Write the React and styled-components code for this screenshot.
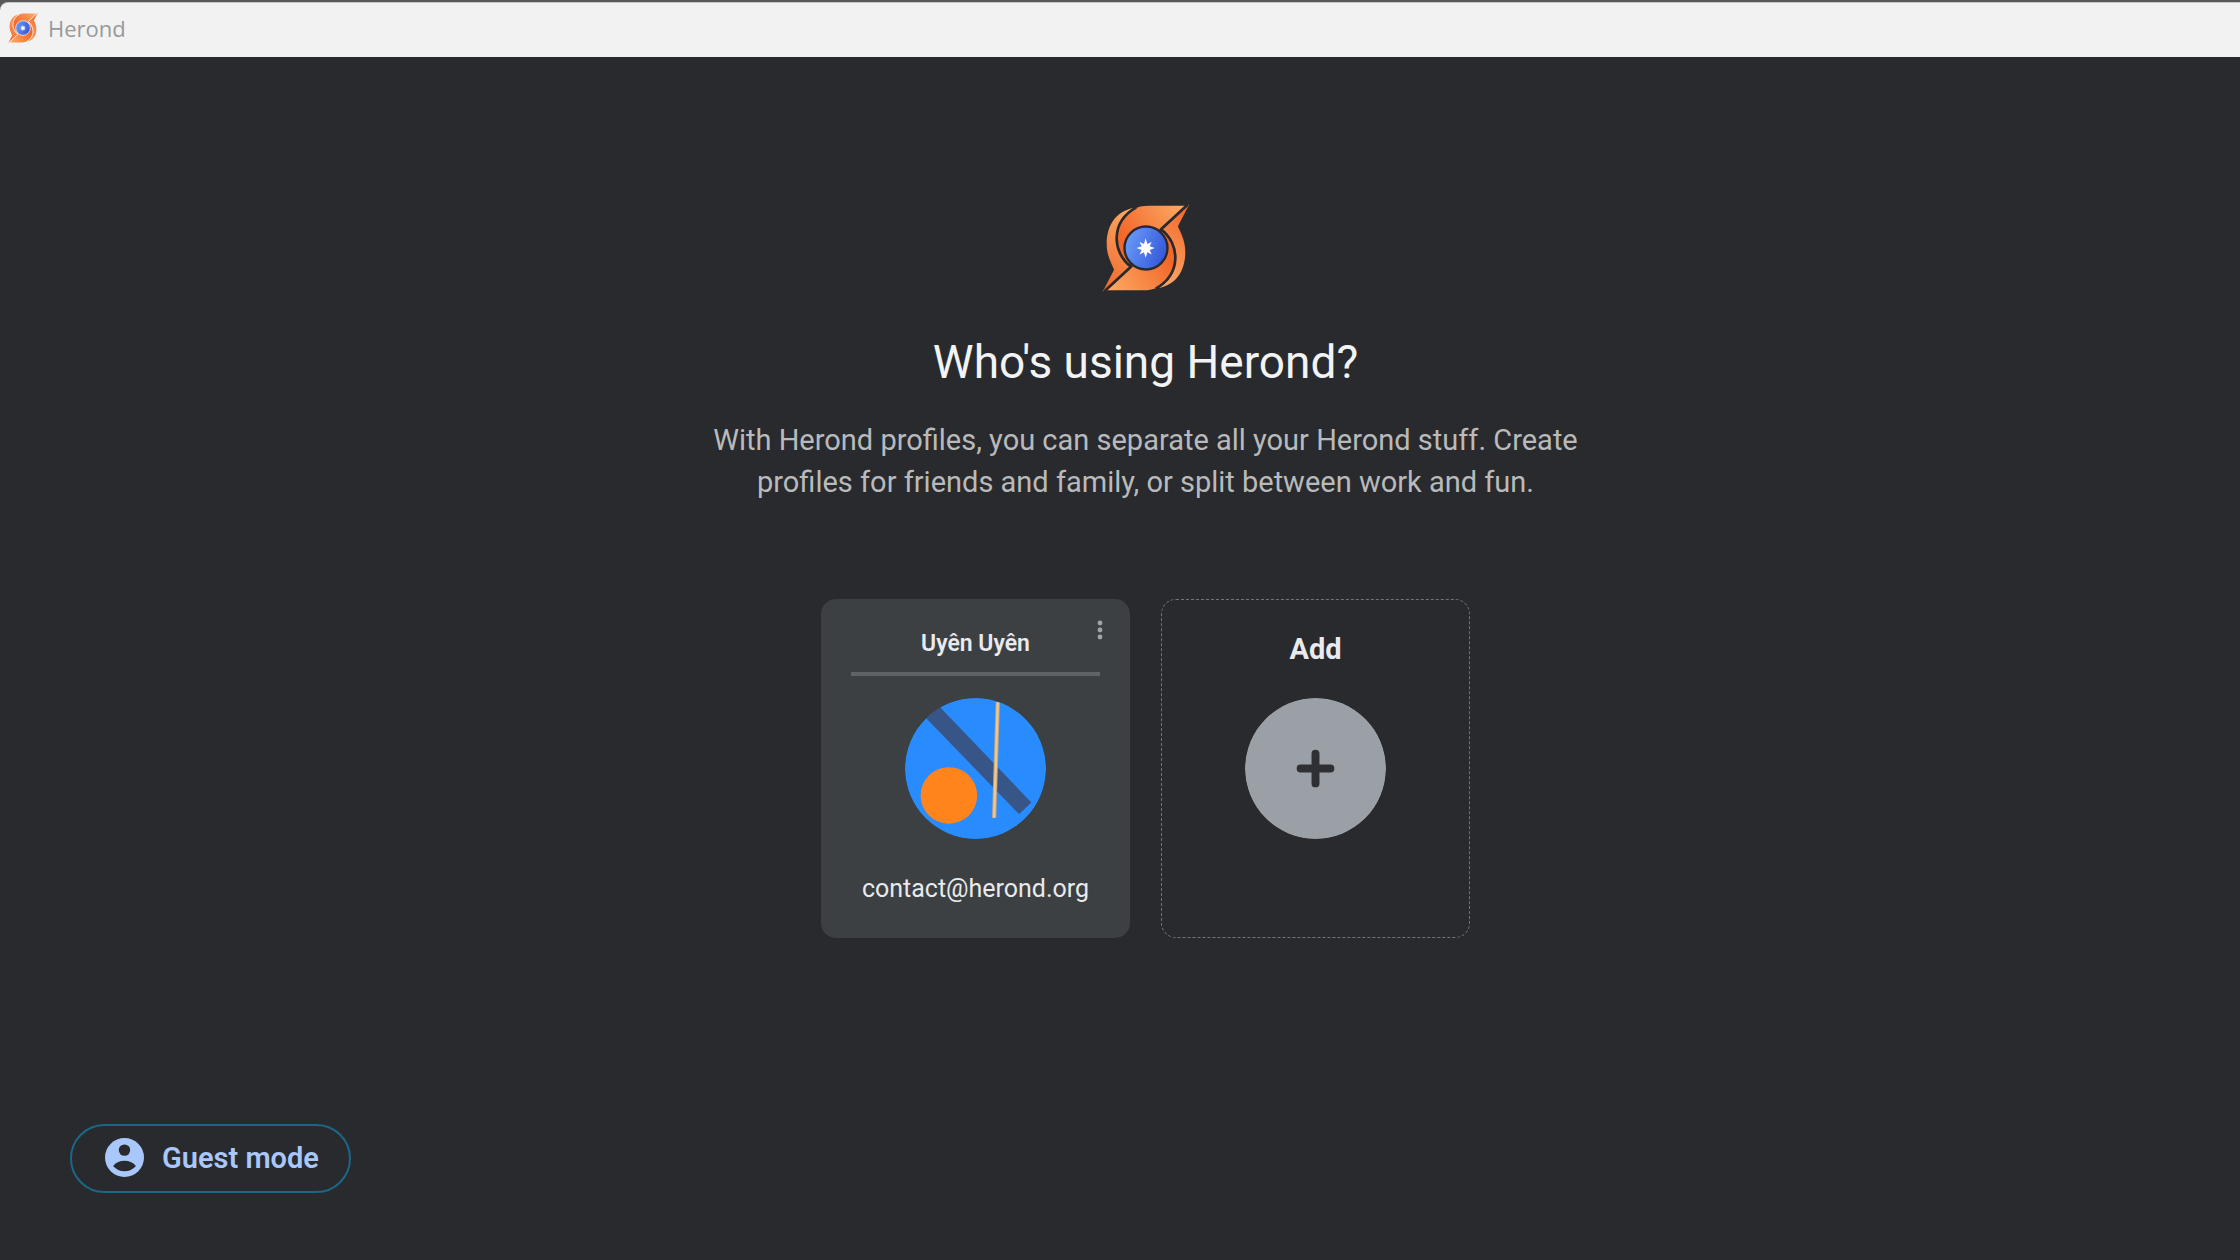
import React from "react";
import styled, { createGlobalStyle } from "styled-components";

const GlobalStyle = createGlobalStyle`
  * {
    box-sizing: border-box;
  }
  body {
    margin: 0;
    background: #292a2d;
    font-family: Roboto, "Liberation Sans", sans-serif;
  }
  button {
    font-family: inherit;
    cursor: pointer;
  }
`;

const Page = styled.div`
  display: flex;
  flex-direction: column;
  min-height: 100vh;
`;

const TitleBar = styled.header`
  background: linear-gradient(#5a5859, #5a5859) top / 100% 12px no-repeat;
  padding-top: 2px;
`;

const TitleBarInner = styled.div`
  display: flex;
  align-items: center;
  gap: 10px;
  height: 55px;
  padding: 0 8px 4px;
  background: #f2f2f2;
  border-top: 1px solid #c4c4c4;
  border-top-left-radius: 8px;
  color: #999999;
  font-family: "Open Sans", "Noto Sans", sans-serif;
  font-size: 22px;
`;

const LogoSvg = styled.svg`
  width: ${(props) => props.$size}px;
  height: ${(props) => props.$size}px;
  color: ${(props) => props.$gap};
`;

const Main = styled.main`
  display: flex;
  flex-direction: column;
  align-items: center;
  padding: 147px 0 40px 51px;
`;

const Title = styled.h1`
  margin: 40px 0 0;
  color: #f1f3f4;
  font-size: 46px;
  font-weight: 400;
  line-height: 60px;
`;

const Subtitle = styled.p`
  max-width: 900px;
  margin: 27px 0 0;
  color: #b9babc;
  font-size: 29px;
  line-height: 42px;
  text-align: center;
`;

const Profiles = styled.div`
  display: flex;
  flex-wrap: wrap;
  gap: 31px;
  margin-top: 96px;
`;

const Card = styled.div`
  position: relative;
  display: flex;
  width: 309px;
  height: 339px;
  border-radius: 15px;
  background: #3c4043;
`;

const CardButton = styled.button`
  display: flex;
  flex: 1;
  flex-direction: column;
  align-items: center;
  padding: 24px 30px 0;
  border: 0;
  border-radius: 15px;
  background: transparent;
  color: #e8eaed;
`;

const AddButton = styled(CardButton)`
  flex: none;
  width: 309px;
  height: 339px;
  padding-top: 23px;
  border: 1px dashed #70757a;
`;

const ProfileName = styled.span`
  width: 100%;
  height: 53px;
  border-bottom: 4px solid #5f6368;
  font-size: 23px;
  font-weight: 600;
  line-height: 42px;
`;

const AddLabel = styled.span`
  height: 53px;
  font-size: 29px;
  font-weight: 700;
  line-height: 52px;
`;

const Picture = styled.svg`
  width: 141px;
  height: 141px;
  margin-top: 22px;
  border-radius: 50%;
`;

const Email = styled.span`
  margin-top: 32px;
  font-size: 25px;
  line-height: 36px;
`;

const MenuButton = styled.button`
  position: absolute;
  top: 12px;
  right: 12px;
  width: 36px;
  height: 38px;
  padding: 0;
  border: 0;
  background: transparent;
`;

const Footer = styled.footer`
  margin-top: auto;
  padding: 0 70px 67px;
`;

const GuestButton = styled.button`
  display: flex;
  align-items: center;
  gap: 18px;
  height: 69px;
  padding: 0 30px 2px 33px;
  border: 2px solid #1b6788;
  border-radius: 35px;
  background: transparent;
  color: #a8c7fa;
  font-size: 29px;
  font-weight: 600;
`;

function Logo({ id, size, gap }) {
  return (
    <LogoSvg $size={size} $gap={gap} viewBox="66 42 262 262" aria-hidden="true">
      <defs>
        <linearGradient id={id + "-wing"} x1="0" y1="0.6" x2="1" y2="0">
          <stop offset="0.1" stopColor="#f2682a" />
          <stop offset="1" stopColor="#fdab66" />
        </linearGradient>
        <linearGradient id={id + "-edge"} x1="0.6" y1="0" x2="0.3" y2="1">
          <stop offset="0" stopColor="#fba564" />
          <stop offset="1" stopColor="#f26a2c" />
        </linearGradient>
        <linearGradient id={id + "-core"} x1="0" y1="0.3" x2="1" y2="0.7">
          <stop offset="0" stopColor="#6a9bf8" />
          <stop offset="1" stopColor="#3255d8" />
        </linearGradient>
      </defs>
      {[0, 180].map((angle) => (
        <g key={angle} transform={`rotate(${angle} 197 173)`}>
          <path
            d="M162 53C104 64 80 108 80 162C80 198 96 222 102 238L68 303L150 230C96 178 96 96 162 53Z"
            fill={`url(#${id}-edge)`}
          />
          <path
            d="M206 47H313L246 113L150 222C102 184 88 96 160 57Q178 47 206 47Z"
            fill={`url(#${id}-wing)`}
          />
        </g>
      ))}
      {[0, 180].map((angle) => (
        <path
          key={angle}
          transform={`rotate(${angle} 197 173)`}
          d="M74 301L152 229C96 186 90 96 168 52"
          fill="none"
          stroke="currentColor"
          strokeWidth="8"
        />
      ))}
      <circle cx="197" cy="173" r="64" fill={`url(#${id}-core)`} stroke="currentColor" strokeWidth="7" />
      <path
        d="M196 144L201 161L214 155L208 168L223 173L208 179L214 192L201 186L196 202L191 186L178 192L184 179L169 173L184 168L178 155L191 161Z"
        fill="#ffffff"
      />
    </LogoSvg>
  );
}

function Avatar() {
  return (
    <Picture viewBox="285 53 424 424" aria-hidden="true">
      <circle cx="497" cy="265" r="212" fill="#288cff" />
      <path d="M340 105L382 72L665 367L628 402Z" fill="#375587" />
      <path d="M564 66L553 413" stroke="#b9a48d" strokeWidth="13" />
      <path d="M564 66L553 413" stroke="#f4c884" strokeWidth="7" />
      <circle cx="417" cy="346" r="85" fill="#ff841c" />
    </Picture>
  );
}

export default function App() {
  return (
    <Page>
      <GlobalStyle />
      <TitleBar>
        <TitleBarInner>
          <Logo id="bar" size={30} gap="#fbe3d6" />
          <span>Herond</span>
        </TitleBarInner>
      </TitleBar>
      <Main>
        <Logo id="main" size={88} gap="#292a2d" />
        <Title>Who's using Herond?</Title>
        <Subtitle>
          With Herond profiles, you can separate all your Herond stuff. Create
          profiles for friends and family, or split between work and fun.
        </Subtitle>
        <Profiles>
          <Card>
            <CardButton>
              <ProfileName>Uyên Uyên</ProfileName>
              <Avatar />
              <Email>contact@herond.org</Email>
            </CardButton>
            <MenuButton aria-label="More actions">
              <svg width="36" height="38" viewBox="0 0 36 38" fill="#a0a4a8">
                <circle cx="18" cy="12" r="2.4" />
                <circle cx="18" cy="19" r="2.4" />
                <circle cx="18" cy="26" r="2.4" />
              </svg>
            </MenuButton>
          </Card>
          <AddButton>
            <AddLabel>Add</AddLabel>
            <Picture viewBox="0 0 142 142" aria-hidden="true">
              <circle cx="71" cy="71" r="71" fill="#9aa0a6" />
              <path d="M56 71H86M71 56V86" stroke="#2e3033" strokeWidth="8" strokeLinecap="round" />
            </Picture>
          </AddButton>
        </Profiles>
      </Main>
      <Footer>
        <GuestButton>
          <svg width="39" height="39" viewBox="0 0 116 116" aria-hidden="true">
            <circle cx="58" cy="58" r="58" fill="#a8c7fa" />
            <circle cx="58" cy="36" r="17" fill="#292a2d" />
            <path d="M24 83Q38 68 58 68T92 83Q78 99 58 99T24 83Z" fill="#292a2d" />
          </svg>
          Guest mode
        </GuestButton>
      </Footer>
    </Page>
  );
}
